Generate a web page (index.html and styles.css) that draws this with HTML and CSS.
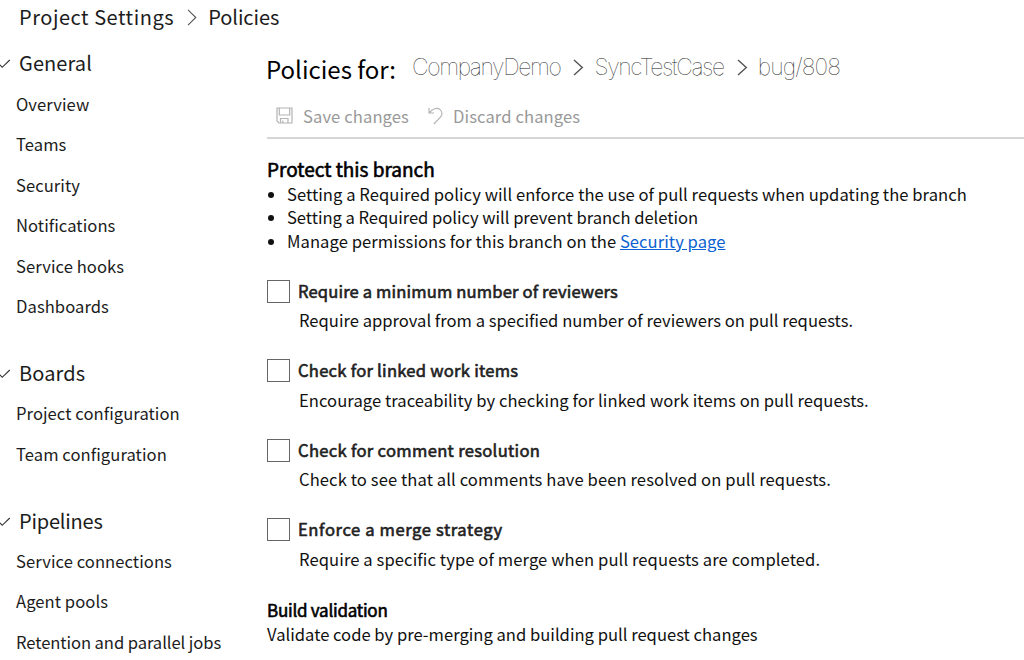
FILE: index.html
```
<!DOCTYPE html>
<html lang="en">
<head>
    <meta charset="UTF-8">
    <meta name="viewport" content="width=device-width, initial-scale=1.0">
    <title>Policies - Project Settings</title>
    <link rel="stylesheet" href="styles.css">
</head>
<body>
    <header class="breadcrumb">
        <span class="crumb-root">Project Settings</span>
        <svg class="sep" width="10" height="17" viewBox="0 0 10 17"><path d="M1 .8 8.8 8.5 1 16.2"/></svg>
        <span class="crumb-page">Policies</span>
    </header>
    <div class="layout">
        <nav class="sidebar">
            <section class="group general">
                <h2><svg class="tick" width="11" height="10" viewBox="0 0 11 10"><path d="M0 5.8 2.2 8.3 9.8 1"/></svg>General</h2>
                <ul>
                    <li>Overview</li>
                    <li>Teams</li>
                    <li>Security</li>
                    <li>Notifications</li>
                    <li>Service hooks</li>
                    <li>Dashboards</li>
                </ul>
            </section>
            <section class="group">
                <h2><svg class="tick" width="11" height="10" viewBox="0 0 11 10"><path d="M0 5.8 2.2 8.3 9.8 1"/></svg>Boards</h2>
                <ul>
                    <li>Project configuration</li>
                    <li>Team configuration</li>
                </ul>
            </section>
            <section class="group pipelines">
                <h2><svg class="tick" width="11" height="10" viewBox="0 0 11 10"><path d="M0 5.8 2.2 8.3 9.8 1"/></svg>Pipelines</h2>
                <ul>
                    <li>Service connections</li>
                    <li>Agent pools</li>
                    <li class="tight">Retention and parallel jobs</li>
                </ul>
            </section>
        </nav>
        <main class="content">
            <div class="title-row">
                <h1>Policies for:</h1>
                <div class="path">
                    <span class="company">CompanyDemo</span>
                    <svg class="arrow" width="11" height="17" viewBox="0 0 11 17"><path d="M1 1 9.3 8.5 1 16"/></svg>
                    <span class="repo">SyncTestCase</span>
                    <svg class="arrow" width="11" height="17" viewBox="0 0 11 17"><path d="M1 1 9.3 8.5 1 16"/></svg>
                    <span class="branch">bug/808</span>
                </div>
            </div>
            <div class="toolbar">
                <svg class="save" width="17" height="17" viewBox="0 0 17 17"><path d="M1 1H16V16H3L1 14ZM3.3 1V8H13.7V1M4.5 16V11.5H12V16M6.8 13.5V16"/></svg>
                <span class="save-label">Save changes</span>
                <svg class="undo" width="16" height="18" viewBox="0 0 16 18"><path d="M1 1V6H6M1.2 5.8C4.5 1.8 9 .2 12 2.6C15 5.2 14.3 8.3 12 10.7L5.8 17"/></svg>
                <span class="discard-label">Discard changes</span>
            </div>

            <h3 class="protect">Protect this branch</h3>
            <ul class="notes">
                <li>Setting a Required policy will enforce the use of pull requests when updating the branch</li>
                <li class="tight">Setting a Required policy will prevent branch deletion</li>
                <li>Manage permissions for this branch on the <a href="#">Security page</a></li>
            </ul>

            <div class="policy reviewers">
                <label><input type="checkbox"><span>Require a minimum number of reviewers</span></label>
                <p>Require approval from a specified number of reviewers on pull requests.</p>
            </div>
            <div class="policy linked">
                <label><input type="checkbox"><span>Check for linked work items</span></label>
                <p>Encourage traceability by checking for linked work items on pull requests.</p>
            </div>
            <div class="policy comments">
                <label><input type="checkbox"><span>Check for comment resolution</span></label>
                <p>Check to see that all comments have been resolved on pull requests.</p>
            </div>
            <div class="policy merge">
                <label><input type="checkbox"><span>Enforce a merge strategy</span></label>
                <p>Require a specific type of merge when pull requests are completed.</p>
            </div>

            <h3 class="build">Build validation</h3>
            <p class="build-text">Validate code by pre-merging and building pull request changes</p>
        </main>
    </div>
</body>
</html>
```
FILE: styles.css
```
* {
    box-sizing: border-box;
}
body {
    margin: 0;
    height: 660px;
    overflow: hidden;
    background-color: #fff;
    color: #1c1c1c;
    font-family: "Noto Sans CJK SC", "Noto Sans", sans-serif;
    font-size: 16.6px;
}
h1, h2, h3, p, ul {
    margin: 0;
    padding: 0;
    font-weight: 400;
}
svg {
    fill: none;
    stroke-width: 1.1;
    flex: none;
}
/* Breadcrumb */
.breadcrumb {
    display: flex;
    align-items: center;
    height: 34px;
    padding: 0 0 1px 19px;
    font-size: 20px;
    line-height: 33px;
}
.crumb-root {
    letter-spacing: 0.53px;
}
.crumb-page {
    letter-spacing: -0.05px;
}
.sep {
    stroke: #555;
    margin: 1px 11px 0 13px;
}
.layout {
    display: flex;
}
/* Sidebar */
.sidebar {
    width: 265px;
    padding-top: 8px;
}
.group {
    margin-bottom: 26.2px;
}
.group h2 {
    display: flex;
    align-items: center;
    height: 40px;
    font-size: 20px;
    line-height: 40px;
    letter-spacing: 0.1px;
}
.general h2 {
    height: 41.6px;
}
.pipelines h2 {
    letter-spacing: -0.2px;
}
.tick {
    stroke: #333;
    margin: 2px 8px 0 0;
}
.group ul {
    list-style: none;
    padding-left: 16px;
}
.group li {
    height: 40.8px;
    line-height: 40.8px;
    letter-spacing: 0.06px;
}
.group .tight {
    letter-spacing: -0.08px;
}
.general li {
    height: 40.5px;
}
/* Main content */
.content {
    flex: 1;
    padding-left: 2px;
    color: #111;
    letter-spacing: 0.05px;
}
.title-row {
    display: flex;
    padding-top: 14px;
    height: 66px;
}
h1 {
    font-size: 24px;
    line-height: 42px;
    color: #000;
    letter-spacing: 0;
    margin-left: -1px;
    width: 146px;
}
.path {
    display: flex;
    align-items: center;
    height: 38px;
    font-family: Inter, sans-serif;
    font-weight: 100;
    font-size: 23px;
    letter-spacing: -1.4px;
    color: #222;
}
.branch {
    letter-spacing: -0.9px;
}
.arrow {
    stroke: #555;
    stroke-width: 1.4;
    margin: 0 10px 0 13px;
}
.toolbar {
    display: flex;
    align-items: center;
    height: 39px;
    padding: 0 0 6px 9px;
    border-bottom: 2px solid #d6d6d6;
    color: #999;
    letter-spacing: 0.1px;
}
.toolbar svg {
    stroke: #b4b4b4;
    stroke-width: 1.2;
}
.save {
    margin-right: 10px;
}
.undo {
    margin: 0 9px 0 19px;
}
h3 {
    color: #000;
    -webkit-text-stroke: 0.6px #000;
}
.protect {
    font-size: 19px;
    line-height: 28px;
    margin-top: 16px;
    letter-spacing: 0;
}
.notes {
    padding-left: 20px;
}
.notes li {
    height: 23.4px;
    line-height: 23.4px;
}
.notes .tight {
    letter-spacing: -0.04px;
}
a {
    color: #0b62d0;
    text-decoration: underline;
}
.notes + .policy {
    margin-top: 24px;
}
.policy {
    height: 79.5px;
}
.policy label {
    display: flex;
    align-items: center;
    height: 27px;
    color: #222;
    -webkit-text-stroke: 0.6px #222;
    letter-spacing: 0.14px;
}
.linked label {
    letter-spacing: 0.25px;
}
.comments label {
    letter-spacing: 0.3px;
}
.merge label {
    letter-spacing: 0.6px;
}
.policy input {
    appearance: none;
    width: 23px;
    height: 23px;
    margin: 1px 8px 0 0;
    border: 1px solid #666;
    background-color: #fff;
}
.policy p {
    padding-left: 32px;
    line-height: 32px;
}
.reviewers p {
    letter-spacing: 0;
}
.comments p, .merge p {
    letter-spacing: 0.09px;
}
.build {
    margin-top: 3px;
    font-size: 17px;
    line-height: 24px;
    letter-spacing: -0.25px;
}
.build-text {
    line-height: 24px;
    letter-spacing: 0;
}
```
